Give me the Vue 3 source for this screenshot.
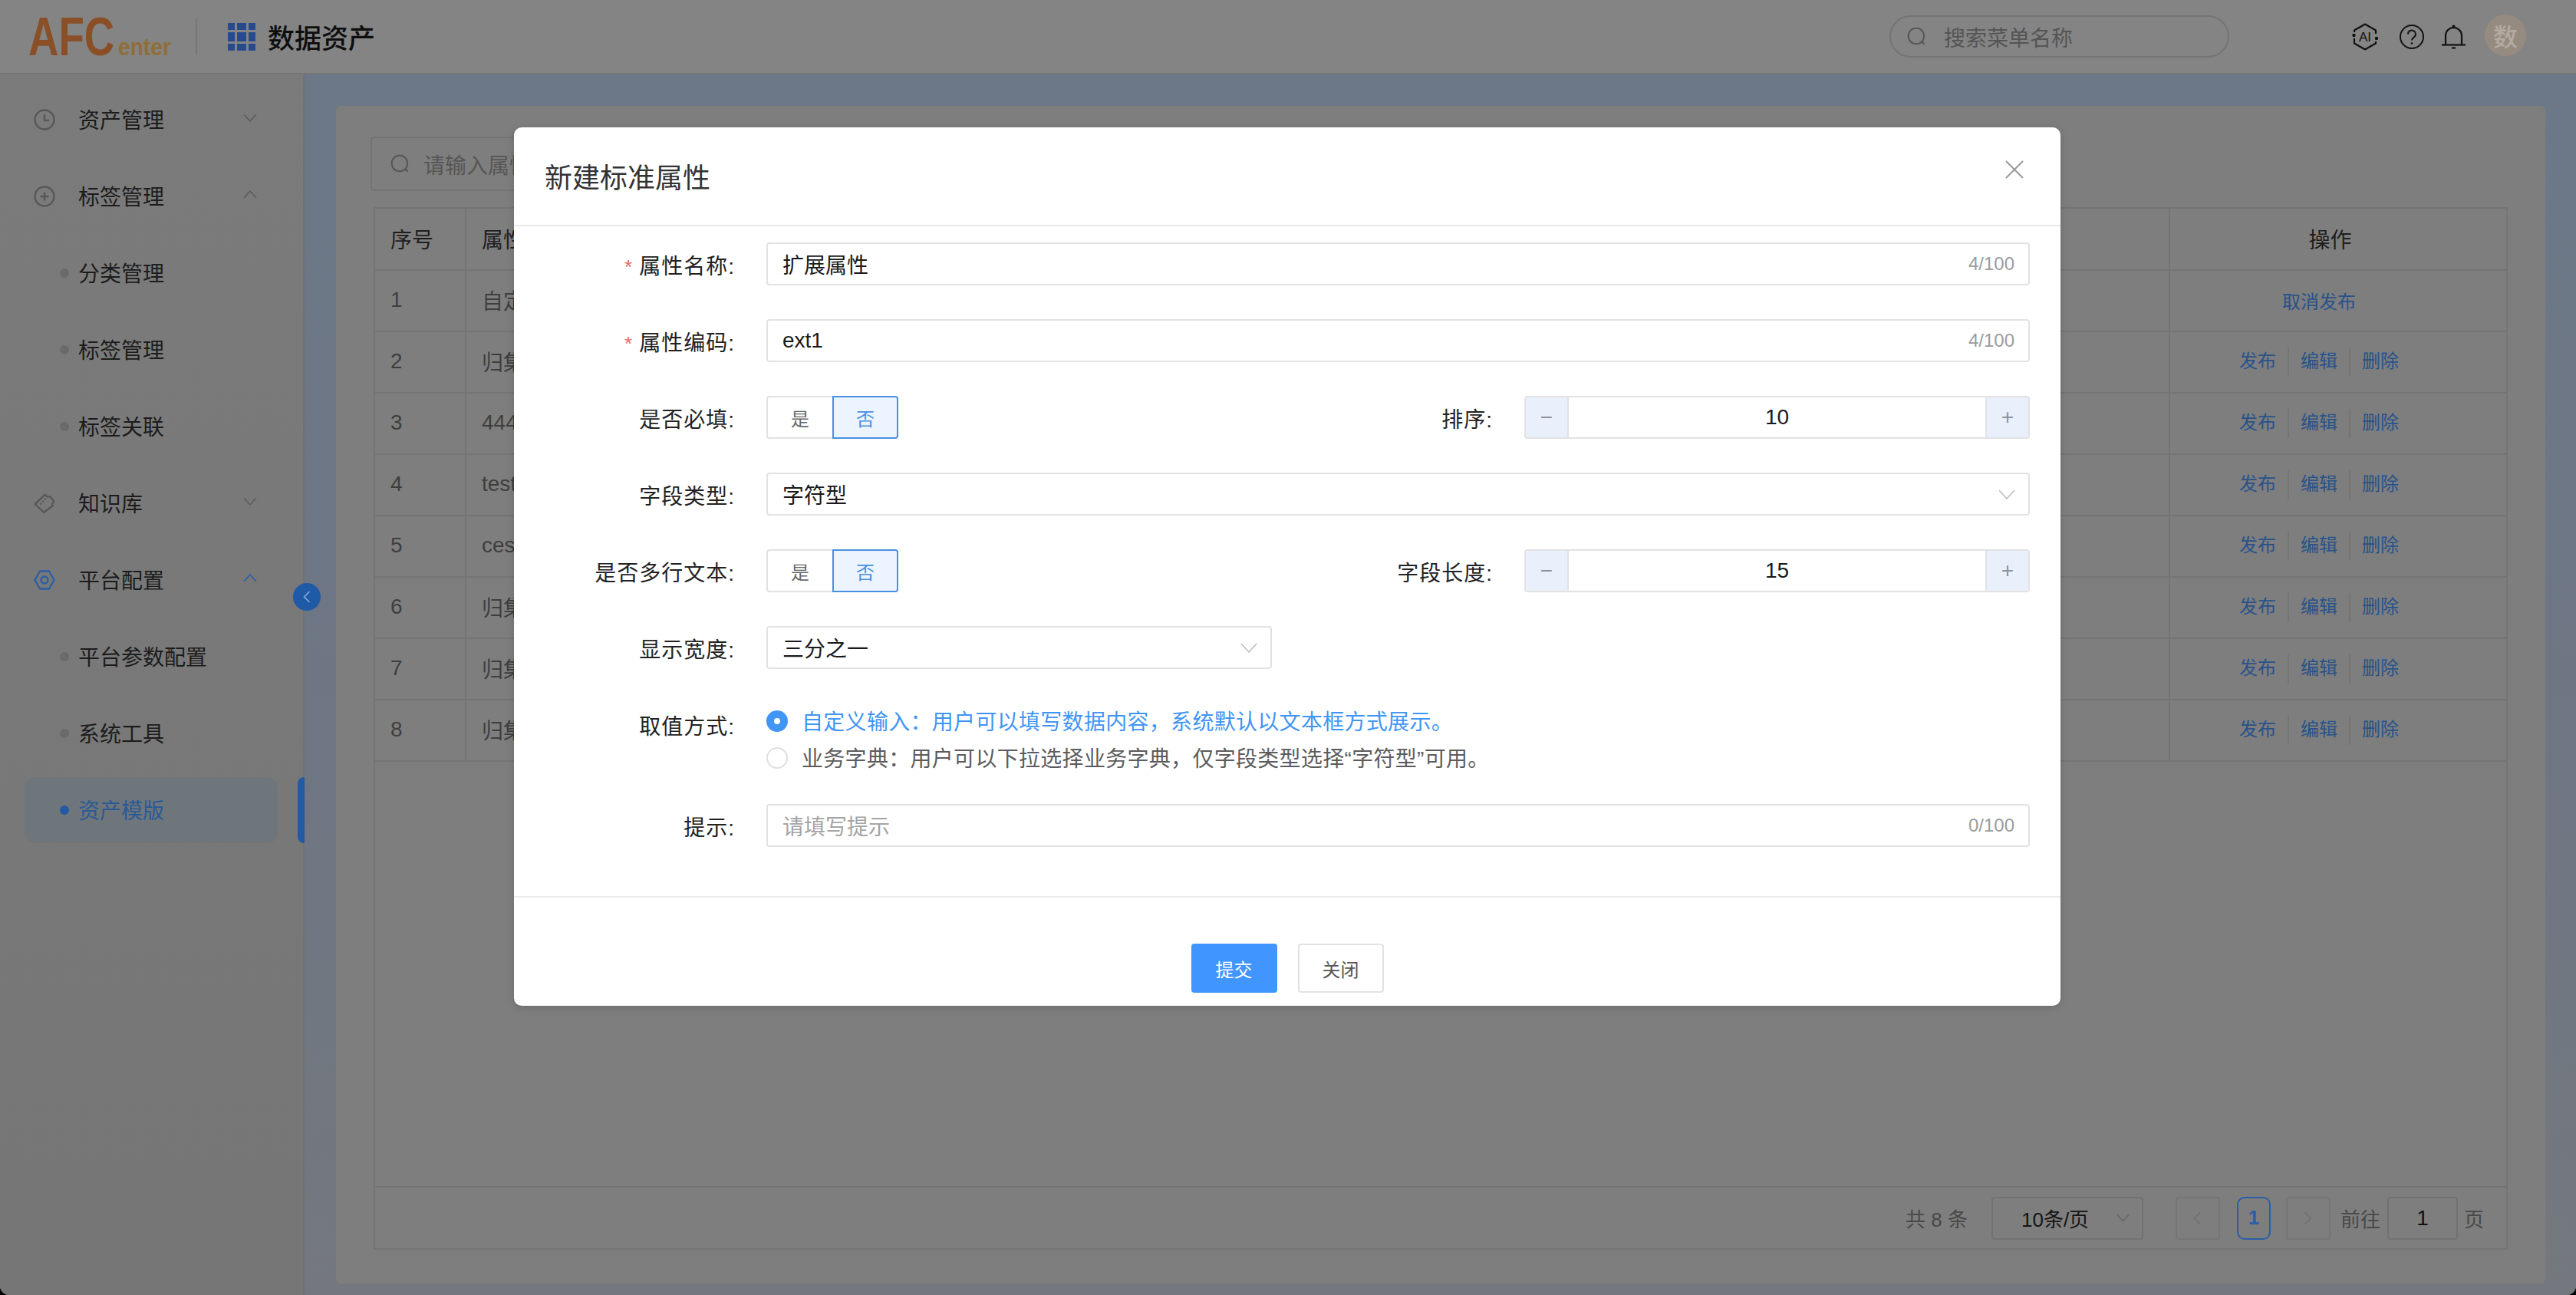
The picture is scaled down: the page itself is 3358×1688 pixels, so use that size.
<script setup>
const menus = [
  { name: '资产管理', icon: 'clock', arrow: 'down' },
  { name: '标签管理', icon: 'plus', arrow: 'up' },
  { name: '分类管理' },
  { name: '标签管理' },
  { name: '标签关联' },
  { name: '知识库', icon: 'ticket', arrow: 'down' },
  { name: '平台配置', icon: 'nut', arrow: 'up', current: true },
  { name: '平台参数配置' },
  { name: '系统工具' },
  { name: '资产模版', active: true },
]

const rows = [
  { no: 1, name: '自定义属性', published: true },
  { no: 2, name: '归集属性' },
  { no: 3, name: '4444' },
  { no: 4, name: 'test' },
  { no: 5, name: 'ceshi' },
  { no: 6, name: '归集属性' },
  { no: 7, name: '归集属性' },
  { no: 8, name: '归集属性' },
]
</script>

<template>
  <div class="page">
    <header class="topbar">
      <div class="logo">
        <span class="logo-afc">AFC</span>
        <span class="logo-enter">enter</span>
      </div>
      <i class="top-sep" />
      <div class="grid-icon">
        <i v-for="n in 9" :key="n" />
      </div>
      <h1 class="app-name">数据资产</h1>

      <div class="menu-search">
        <svg class="search-ico" viewBox="0 0 24 24"><circle cx="11" cy="11" r="9.5" /><path d="M18 18l3 3" /></svg>
        <span>搜索菜单名称</span>
      </div>
      <svg class="ico-ai" viewBox="0 0 36 36" fill="none" stroke="#111" stroke-width="2.2">
        <path d="M4 12V9.500L18 1.500 32 9.500V14M32 24v2.500L18 34.500 4 26.500V20" stroke-linejoin="round" />
        <circle cx="3.500" cy="16" r="2.200" fill="#111" stroke="none" />
        <circle cx="33" cy="20" r="2.200" fill="#111" stroke="none" />
        <text x="18" y="24" text-anchor="middle" class="ai-text">AI</text>
      </svg>
      <svg class="ico-help" viewBox="0 0 32 32" fill="none" stroke="#111" stroke-width="2">
        <circle cx="16" cy="16" r="15" />
        <path d="M11 12.500a5 5 0 1 1 7.800 4.100c-1.800 1.200-2.800 2-2.800 4" />
        <circle cx="16" cy="24.500" r="1.300" fill="#111" stroke="none" />
      </svg>
      <svg class="ico-bell" viewBox="0 0 31 32" fill="none" stroke="#111" stroke-width="2.200">
        <path d="M5 26V14.500a10.500 10.500 0 0 1 21 0V26" />
        <path d="M0 26.500h31" />
        <circle cx="15.500" cy="2.500" r="2" fill="#111" stroke="none" />
        <path d="M13 30.500h5" />
      </svg>
      <div class="avatar">数</div>
    </header>

    <div class="layout">
      <aside class="sidebar">
        <div
          v-for="m in menus"
          :key="m.name + m.icon"
          class="menu-row"
          :class="{ 'is-active': m.active, 'is-current': m.current }"
        >
          <svg v-if="m.icon" class="menu-ico" viewBox="0 0 28 28" fill="none" stroke-width="2.400">
            <template v-if="m.icon === 'clock'">
              <circle cx="14" cy="14" r="12.500" />
              <path d="M14 7v8h6" />
            </template>
            <template v-else-if="m.icon === 'plus'">
              <circle cx="14" cy="14" r="12.500" />
              <path d="M14 8.500v11M8.500 14h11" />
            </template>
            <template v-else-if="m.icon === 'ticket'">
              <path d="M1.500 15L15 2.500c1 1.500 3 4 4.500 3 1-.5 1.500-.5 2 0l4.500 5.500c.500.800 0 1.500-1 2.200-1.500 1-1 2.800 0 3.800L13 26z" stroke-linejoin="round" />
              <path d="M9 14.500l.1.1M12 11.500l.1.1M15 8.500l.1.1" stroke-linecap="round" />
            </template>
            <template v-else>
              <path d="M8 2.500h12L26.500 14 20 25.500H8L1.500 14z" stroke-linejoin="round" />
              <circle cx="14" cy="14" r="4.500" />
            </template>
          </svg>
          <i v-else class="menu-dot" />
          <span class="menu-name">{{ m.name }}</span>
          <svg v-if="m.arrow" class="menu-arrow" viewBox="0 0 18 11" fill="none">
            <path :d="m.arrow === 'down' ? 'M1 1l8 9 8-9' : 'M1 10l8-9 8 9'" />
          </svg>
        </div>
        <div class="collapse-btn">
          <svg viewBox="0 0 10 16" fill="none"><path d="M8.500 1L1.500 8l7 7" /></svg>
        </div>
      </aside>

      <main class="content">
        <section class="card">
          <div class="attr-search">
            <svg class="search-ico" viewBox="0 0 24 24"><circle cx="11" cy="11" r="9.500" /><path d="M18 18l3 3" /></svg>
            <span>请输入属性</span>
          </div>

          <div class="table-frame">
            <table class="attr-table">
              <colgroup>
                <col class="col-no">
                <col>
                <col class="col-op">
              </colgroup>
              <thead>
                <tr>
                  <th>序号</th>
                  <th>属性名称</th>
                  <th class="th-op">操作</th>
                </tr>
              </thead>
              <tbody>
                <tr v-for="r in rows" :key="r.no">
                  <td>{{ r.no }}</td>
                  <td>{{ r.name }}</td>
                  <td class="td-op">
                    <a v-if="r.published">取消发布</a>
                    <template v-else>
                      <a>发布</a><i /><a>编辑</a><i /><a>删除</a>
                    </template>
                  </td>
                </tr>
              </tbody>
            </table>

            <div class="pager">
              <span class="pager-total">共 8 条</span>
              <div class="pager-size">
                <span>10条/页</span>
                <svg viewBox="0 0 18 11" fill="none"><path d="M1 1l8 9 8-9" /></svg>
              </div>
              <div class="pager-btn">
                <svg viewBox="0 0 10 16" fill="none"><path d="M8.500 1L1.500 8l7 7" /></svg>
              </div>
              <div class="pager-num">1</div>
              <div class="pager-btn next">
                <svg viewBox="0 0 10 16" fill="none"><path d="M1.500 1l7 7-7 7" /></svg>
              </div>
              <span class="pager-text">前往</span>
              <div class="pager-input">1</div>
              <span class="pager-text">页</span>
            </div>
          </div>
        </section>
      </main>
    </div>

    <div class="mask">
      <div class="dialog">
        <div class="dialog-head">
          <h2>新建标准属性</h2>
          <svg class="dialog-close" viewBox="0 0 26 26" fill="none"><path d="M2 2l22 22M24 2L2 24" /></svg>
        </div>

        <form class="form" @submit.prevent>
          <div class="form-row">
            <label class="form-label"><em>*</em>属性名称:</label>
            <div class="field">
              <span>扩展属性</span>
              <small>4/100</small>
            </div>
          </div>

          <div class="form-row">
            <label class="form-label"><em>*</em>属性编码:</label>
            <div class="field">
              <span>ext1</span>
              <small>4/100</small>
            </div>
          </div>

          <div class="form-row">
            <div class="half">
              <label class="form-label">是否必填:</label>
              <div class="toggle"><span>是</span><span class="on">否</span></div>
            </div>
            <div class="half">
              <label class="form-label">排序:</label>
              <div class="stepper"><b>−</b><span>10</span><b>+</b></div>
            </div>
          </div>

          <div class="form-row">
            <label class="form-label">字段类型:</label>
            <div class="field">
              <span>字符型</span>
              <svg class="select-arrow" viewBox="0 0 22 13" fill="none"><path d="M1 1l10 11L21 1" /></svg>
            </div>
          </div>

          <div class="form-row">
            <div class="half">
              <label class="form-label">是否多行文本:</label>
              <div class="toggle"><span>是</span><span class="on">否</span></div>
            </div>
            <div class="half">
              <label class="form-label">字段长度:</label>
              <div class="stepper"><b>−</b><span>15</span><b>+</b></div>
            </div>
          </div>

          <div class="form-row">
            <div class="half">
              <label class="form-label">显示宽度:</label>
              <div class="field">
                <span>三分之一</span>
                <svg class="select-arrow" viewBox="0 0 22 13" fill="none"><path d="M1 1l10 11L21 1" /></svg>
              </div>
            </div>
          </div>

          <div class="form-row row-radio">
            <label class="form-label">取值方式:</label>
            <div class="radio-list">
              <div class="radio checked"><i /><span>自定义输入：用户可以填写数据内容，系统默认以文本框方式展示。</span></div>
              <div class="radio"><i /><span>业务字典：用户可以下拉选择业务字典，仅字段类型选择“字符型”可用。</span></div>
            </div>
          </div>

          <div class="form-row">
            <label class="form-label">提示:</label>
            <div class="field">
              <span class="placeholder">请填写提示</span>
              <small>0/100</small>
            </div>
          </div>
        </form>

        <div class="dialog-foot">
          <button class="btn primary" type="button">提交</button>
          <button class="btn" type="button">关闭</button>
        </div>
      </div>
    </div>
  </div>
</template>

<style>
html,
body {
  margin: 0;
  background: #000;
  overflow: hidden;
}
</style>

<style scoped>
.page {
  position: relative;
  width: 3358px;
  height: 1688px;
  display: flex;
  flex-direction: column;
  overflow: hidden;
  border-radius: 0 0 12px 12px;
  background: #7a7a7a;
  font-family: "Liberation Sans", "Noto Sans CJK SC", sans-serif;
  font-size: 28px;
  color: #1c1c1c;
}

/* Topbar */
.topbar {
  flex: none;
  height: 97px;
  box-sizing: border-box;
  display: flex;
  align-items: center;
  padding: 0 65px 0 37px;
  background: #848484;
  border-bottom: 2px solid #757575;
}

.logo {
  width: 182px;
  height: 50px;
  display: flex;
  align-items: flex-end;
  line-height: 1;
}

.logo-afc {
  width: 117px;
  font-size: 70px;
  font-weight: 700;
  line-height: 50px;
  color: #8a4f26;
  transform: scaleX(0.78);
  transform-origin: left center;
}

.logo-enter {
  font-size: 32px;
  font-weight: 700;
  line-height: 24px;
  color: #8f6e38;
  transform: scaleX(0.88);
  transform-origin: left center;
}

.top-sep {
  width: 2px;
  height: 48px;
  margin-left: 36px;
  background: #777;
}

.grid-icon {
  width: 36px;
  height: 36px;
  margin-left: 40px;
  display: grid;
  grid-template-columns: 9px 12px 9px;
  grid-template-rows: 9px 12px 9px;
  gap: 3px;
}

.grid-icon i {
  background: #274a8c;
}

.app-name {
  margin: 0 0 0 16px;
  font-size: 35px;
  font-weight: 500;
  color: #0e0e0e;
}

.menu-search {
  width: 443px;
  height: 55px;
  box-sizing: border-box;
  margin-left: auto;
  display: flex;
  align-items: center;
  gap: 22px;
  padding-left: 21px;
  border: 2px solid #747474;
  border-radius: 28px;
  color: #555;
}

.search-ico {
  width: 26px;
  height: 26px;
  fill: none;
  stroke: #555;
  stroke-width: 1.800;
}

.ico-ai {
  width: 36px;
  height: 36px;
  margin-left: 159px;
}

.ai-text {
  font-size: 17px;
  font-weight: 500;
  fill: #111;
  stroke: none;
}

.ico-help {
  width: 32px;
  height: 32px;
  margin-left: 27px;
}

.ico-bell {
  width: 31px;
  height: 32px;
  margin-left: 23px;
}

.avatar {
  width: 54px;
  height: 54px;
  margin-left: 25px;
  margin-bottom: 4px;
  border-radius: 50%;
  display: flex;
  align-items: center;
  justify-content: center;
  background: #968b80;
  color: #b3aba2;
  font-size: 32px;
  font-weight: 500;
}

.layout {
  flex: 1;
  min-height: 0;
  display: flex;
}

/* Sidebar */
.sidebar {
  position: relative;
  flex: none;
  width: 397px;
  box-sizing: border-box;
  padding-top: 9px;
  background: linear-gradient(#7b7b7b, #767676);
  border-right: 2px solid #717171;
}

.menu-row {
  position: relative;
  width: 330px;
  height: 86px;
  box-sizing: border-box;
  margin: 7px 0 14px 32px;
  padding: 0 27px 0 12px;
  display: flex;
  align-items: center;
  border-radius: 14px;
}

.menu-name {
  padding-bottom: 3px;
}

.menu-ico {
  width: 28px;
  height: 28px;
  margin-right: 30px;
  stroke: #585858;
}

.menu-dot {
  width: 12px;
  height: 12px;
  margin: 0 12px 0 34px;
  border-radius: 50%;
  background: #6a6a6a;
}

.menu-arrow {
  width: 18px;
  height: 11px;
  margin: 0 0 6px auto;
  stroke: #5c5c5c;
  stroke-width: 1.600;
}

.is-current .menu-ico {
  stroke: #2c5fa4;
}

.is-current .menu-arrow {
  stroke: #2c5fa4;
}

.is-active {
  background: #6e767b;
  color: #2a5a96;
}

.is-active .menu-dot {
  background: #225aa4;
}

.is-active::after {
  content: "";
  position: absolute;
  top: 0;
  bottom: 0;
  left: 356px;
  width: 9px;
  border-radius: 8px 0 0 8px;
  background: #225aa4;
}

.collapse-btn {
  position: absolute;
  z-index: 1;
  top: 663px;
  left: 382px;
  width: 36px;
  height: 36px;
  display: flex;
  align-items: center;
  justify-content: center;
  border-radius: 50%;
  background: #1e5aa6;
}

.collapse-btn svg {
  width: 10px;
  height: 16px;
  stroke: #8fb0dc;
  stroke-width: 1.500;
}

/* Content */
.content {
  flex: 1;
  min-width: 0;
  display: flex;
  padding: 41px 40px 15px 41px;
  background: linear-gradient(180deg, #6c7888 0%, #6e7684 50%, #74787e 100%);
}

.card {
  flex: 1;
  min-width: 0;
  display: flex;
  flex-direction: column;
  box-sizing: border-box;
  padding: 40px 49px 44px 45px;
  border-radius: 6px;
  background: #7e7e7e;
}

.attr-search {
  width: 470px;
  height: 71px;
  box-sizing: border-box;
  flex: none;
  display: flex;
  align-items: center;
  gap: 17px;
  padding-left: 24px;
  border: 2px solid #747474;
  border-radius: 4px;
  color: #565656;
}

.table-frame {
  flex: 1;
  min-height: 0;
  display: flex;
  flex-direction: column;
  margin: 21px 0 0 4px;
  border: 2px solid #747474;
}

.attr-table {
  width: 100%;
  table-layout: fixed;
  border-collapse: collapse;
}

.col-no {
  width: 118px;
}

.col-op {
  width: 439px;
}

.attr-table th,
.attr-table td {
  height: 80px;
  box-sizing: border-box;
  padding: 0 0 2px 20px;
  border-right: 2px solid #747474;
  border-bottom: 2px solid #747474;
  text-align: left;
  white-space: nowrap;
  color: #3e3e3e;
  font-weight: 400;
}

.attr-table th {
  color: #1e1e1e;
}

.attr-table th.th-op,
.attr-table td.td-op {
  border-right: 0;
  text-align: center;
}

.attr-table th.th-op {
  padding: 0 21px 2px 0;
}

.attr-table td.td-op {
  padding: 0 50px 2px 0;
  font-size: 24px;
  color: #28528a;
}

.td-op i {
  display: inline-block;
  width: 2px;
  height: 38px;
  margin: 0 15px;
  vertical-align: middle;
  background: #747474;
}

.pager {
  margin-top: auto;
  height: 81px;
  box-sizing: border-box;
  display: flex;
  align-items: center;
  padding-right: 29px;
  justify-content: flex-end;
  border-top: 2px solid #747474;
  font-size: 26px;
  color: #484848;
}

.pager-size {
  width: 198px;
  height: 56px;
  box-sizing: border-box;
  margin: 0 42px 0 31px;
  display: flex;
  align-items: center;
  padding: 0 16px 0 37px;
  border: 2px solid #727272;
  border-radius: 4px;
  color: #141414;
}

.pager-size svg {
  width: 17px;
  height: 11px;
  margin-left: auto;
  stroke: #666;
  stroke-width: 1.500;
}

.pager-btn {
  width: 58px;
  height: 56px;
  box-sizing: border-box;
  display: flex;
  align-items: center;
  justify-content: center;
  border: 2px solid #767676;
  border-radius: 4px;
}

.pager-btn svg {
  width: 11px;
  height: 24px;
  stroke: #707070;
  stroke-width: 1.400;
}

.pager-num {
  width: 44px;
  height: 56px;
  box-sizing: border-box;
  margin: 0 20px 0 22px;
  display: flex;
  align-items: center;
  justify-content: center;
  border: 2px solid #2a5fa6;
  border-radius: 10px;
  font-weight: 700;
  color: #2a5fa6;
}

.pager-btn.next {
  margin-right: 13px;
}

.pager-input {
  width: 92px;
  height: 56px;
  box-sizing: border-box;
  margin: 0 8px 0 9px;
  display: flex;
  align-items: center;
  justify-content: center;
  border: 2px solid #727272;
  border-radius: 4px;
  font-size: 28px;
  color: #111;
}

/* Dialog */
.mask {
  position: absolute;
  inset: 0;
}

.dialog {
  width: 2016px;
  margin: 166px 0 0 670px;
  border-radius: 10px;
  background: #fff;
  box-shadow: 0 2px 12px rgba(0, 0, 0, 0.15);
}

.dialog-head {
  height: 129px;
  box-sizing: border-box;
  display: flex;
  align-items: center;
  justify-content: space-between;
  padding: 0 47px 2px 40px;
  border-bottom: 2px solid #e9e9e9;
}

.dialog-head h2 {
  margin: 0;
  font-size: 36px;
  font-weight: 400;
  color: #333;
}

.dialog-close {
  width: 26px;
  height: 26px;
  margin-bottom: 16px;
  stroke: #999;
  stroke-width: 2;
}

.form {
  padding: 21px 40px 20px 0;
}

.form-row {
  display: flex;
  height: 56px;
  margin-bottom: 44px;
}

.form-label {
  flex: none;
  width: 288px;
  box-sizing: border-box;
  text-align: right;
  line-height: 64px;
  letter-spacing: 1px;
  color: #222;
}

.form-label em {
  margin-right: 8px;
  font-style: normal;
  font-size: 26px;
  color: #e86a6a;
}

.half {
  flex: 0 0 50%;
  min-width: 0;
  display: flex;
}

.field {
  flex: 1;
  min-width: 0;
  height: 56px;
  box-sizing: border-box;
  margin-left: 41px;
  display: flex;
  align-items: center;
  justify-content: space-between;
  padding: 0 18px 0 19px;
  border: 2px solid #e2e2e2;
  border-radius: 4px;
  color: #1a1a1a;
}

.field small {
  font-size: 24px;
  color: #9c9c9c;
}

.placeholder {
  color: #a4a4a4;
}

.select-arrow {
  width: 22px;
  height: 13px;
  margin-right: -1px;
  stroke: #bdbdbd;
  stroke-width: 1.600;
}

.toggle {
  width: 172px;
  height: 56px;
  margin-left: 41px;
  display: flex;
  font-size: 24px;
  color: #666;
}

.toggle span {
  width: 86px;
  box-sizing: border-box;
  display: flex;
  align-items: center;
  justify-content: center;
  border: 2px solid #e2e2e2;
  border-right: 0;
  border-radius: 4px 0 0 4px;
}

.toggle .on {
  border: 2px solid #4a90e2;
  border-radius: 0 4px 4px 0;
  background: #ebf4ff;
  color: #4a90e2;
}

.stepper {
  flex: 1;
  height: 56px;
  box-sizing: border-box;
  margin-left: 41px;
  display: flex;
  align-items: stretch;
  border: 2px solid #e2e2e2;
  border-radius: 4px;
}

.stepper b {
  width: 54px;
  display: flex;
  align-items: center;
  justify-content: center;
  background: #e9effb;
  font-weight: 400;
  font-size: 28px;
  color: #8d929c;
}

.stepper b:first-child {
  border-right: 2px solid #dfe2ea;
}

.stepper b:last-child {
  border-left: 2px solid #dfe2ea;
}

.stepper span {
  flex: 1;
  display: flex;
  align-items: center;
  justify-content: center;
  color: #1a1a1a;
}

.row-radio {
  height: 88px;
}

.radio-list {
  margin-left: 41px;
}

.radio {
  height: 48px;
  display: flex;
  align-items: center;
  gap: 18px;
  letter-spacing: 0.3px;
  color: #5c5c5c;
  white-space: nowrap;
}

.radio span {
  padding-bottom: 2px;
}

.radio i {
  width: 28px;
  height: 28px;
  box-sizing: border-box;
  border: 2px solid #dfdfdf;
  border-radius: 50%;
}

.radio.checked {
  color: #4095f5;
}

.radio.checked i {
  border: 10px solid #4095f5;
}

.dialog-foot {
  height: 143px;
  box-sizing: border-box;
  padding-top: 60px;
  display: flex;
  justify-content: center;
  gap: 27px;
  border-top: 2px solid #ececec;
}

.btn {
  width: 112px;
  height: 64px;
  padding: 0;
  border: 2px solid #e2e2e2;
  border-radius: 4px;
  background: #fff;
  font-family: inherit;
  font-size: 24px;
  color: #555;
}

.btn.primary {
  border-color: #4095fe;
  background: #4095fe;
  color: #fff;
}
</style>
